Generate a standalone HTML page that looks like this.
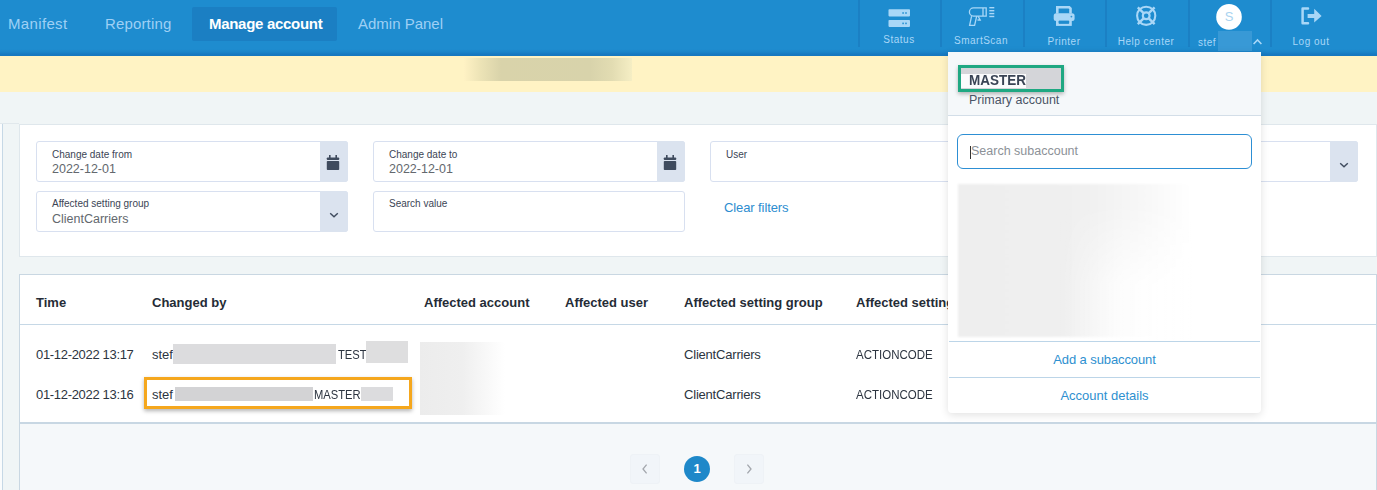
<!DOCTYPE html>
<html><head><meta charset="utf-8">
<style>
*{box-sizing:border-box;margin:0;padding:0}
html,body{width:1377px;height:490px;overflow:hidden;background:#f0f5f6;font-family:"Liberation Sans",sans-serif;position:relative}
.a{position:absolute}
#nav{left:0;top:0;width:1377px;height:56px;background:linear-gradient(180deg,#1e8ccf 0px,#1e8ccf 49px,#1b84c9 52px,#1779c1 54px,#1677c0 56px)}
.tab{top:0;height:48px;line-height:48px;font-size:15px;color:#9fd0f5;white-space:nowrap}
.act{left:192px;top:7px;width:145px;height:34px;background:#1b7fc3;border-radius:2px}
.sep{top:0;width:2px;height:47px;background:#1b80c4}
.lbl{top:34px;font-size:10px;letter-spacing:0.5px;color:#a9d7f7;white-space:nowrap;text-align:center;width:82px}
#yel{left:0;top:56px;width:1377px;height:36px;background:#fff3c4}
#vline{left:2px;top:124px;width:1px;height:366px;background:#c6d8e6}
#hline{left:0;top:123px;width:19px;height:1px;background:#e1e8ec}
.card{background:#fff;border:1px solid #dfe7ec}
.inp{background:#fff;border:1px solid #d8e0f0;border-radius:3px}
.btn{background:#dbe3ef;border-radius:0 3px 3px 0}
.ilbl{font-size:10px;color:#3c4555;white-space:nowrap}
.ival{font-size:12.5px;color:#63686e;white-space:nowrap}
.th{top:295px;font-size:13px;font-weight:bold;color:#252c36;white-space:nowrap}
.td{font-size:13px;color:#2c3440;white-space:nowrap}
</style></head><body>
<div id="nav" class="a">
  <div class="a act"></div>
  <div class="a tab" style="left:8px;letter-spacing:0.35px">Manifest</div>
  <div class="a tab" style="left:105px;letter-spacing:0.15px">Reporting</div>
  <div class="a tab" style="left:209px;color:#fff;font-weight:bold;letter-spacing:-0.3px">Manage account</div>
  <div class="a tab" style="left:358px">Admin Panel</div>
  <div class="a sep" style="left:858px"></div>
  <div class="a sep" style="left:940px"></div>
  <div class="a sep" style="left:1023px"></div>
  <div class="a sep" style="left:1105px"></div>
  <div class="a sep" style="left:1188px"></div>
  <div class="a sep" style="left:1270px"></div>
  <div class="a lbl" style="left:858px">Status</div>
  <div class="a lbl" style="left:940px;top:35px">SmartScan</div>
  <div class="a lbl" style="left:1023px;top:36px">Printer</div>
  <div class="a lbl" style="left:1105px;top:36px">Help center</div>
  <div class="a lbl" style="left:1270px;top:36px">Log out</div>

  <svg class="a" style="left:0;top:0" width="1377" height="56">
    <g fill="#a9d7f7">
      <rect x="888.5" y="9.2" width="21.5" height="7.2" rx="0.8"/>
      <rect x="888.5" y="19.9" width="21.5" height="7" rx="0.8"/>
    </g>
    <g fill="#2a93d3">
      <rect x="902.3" y="12.2" width="1.6" height="1.6"/><rect x="905.2" y="12.2" width="1.6" height="1.6"/>
      <rect x="902.3" y="22.6" width="1.6" height="1.6"/><rect x="905.2" y="22.6" width="1.6" height="1.6"/>
    </g>
    <g fill="none" stroke="#a9d7f7" stroke-width="1.3">
      <path d="M973.5 7.9 H986.2 V16.1 H973.5 A4.1 4.1 0 0 1 973.5 7.9 Z"/>
      <path d="M983 7.9 V16.1"/>
      <path d="M971.6 16.1 L969.6 25.3 H974.6 L976.7 16.1"/>
      <path d="M978.2 16.4 L980.2 20 H977.5"/>
    </g>
    <g fill="#a9d7f7">
      <rect x="989.3" y="7" width="5" height="1.4"/><rect x="989.3" y="10" width="5" height="1.4"/>
      <rect x="989.3" y="12.9" width="5" height="1.4"/><rect x="989.3" y="15.8" width="5" height="1.4"/>
    </g>
    <g fill="none" stroke="#a9d7f7" stroke-width="2.6">
      <path d="M1057.3 13.5 V7.3 H1069.2 L1070.5 8.6 V13.5"/>
      <rect x="1057.3" y="19.6" width="13.2" height="5"/>
    </g>
    <rect x="1053.7" y="13.3" width="20.9" height="7.6" rx="2.5" fill="#a9d7f7"/>
    <rect x="1057.3" y="19.6" width="13.2" height="1.4" fill="#a9d7f7"/>
    <rect x="1058.9" y="20.6" width="10" height="3.2" fill="#1e8ccf"/>
    <circle cx="1071.4" cy="16.6" r="0.9" fill="#2a93d3"/>
    <g fill="none" stroke="#a9d7f7">
      <circle cx="1146.2" cy="15.8" r="9.1" stroke-width="2.1"/>
      <circle cx="1146.2" cy="15.8" r="3.4" stroke-width="2.2"/>
      <path d="M1137.8 7.4 L1143.6 13.2 M1154.6 7.4 L1148.8 13.2 M1137.8 24.2 L1143.6 18.4 M1154.6 24.2 L1148.8 18.4" stroke-width="2.4"/>
    </g>
    <circle cx="1229" cy="16.9" r="12.8" fill="#fff"/>
    <path d="M1302.6 8.4 H1308 M1302.6 8.4 V23.3 M1302.6 23.3 H1308" fill="none" stroke="#a9d7f7" stroke-width="2.5" stroke-linecap="round"/>
    <path d="M1307.6 13.9 H1314.2 V8.8 L1321.6 16 L1314.2 22.6 V18.1 H1307.6 Z" fill="#a9d7f7"/>
    <path d="M1253.6 44 L1257.5 40 L1261.4 44" fill="none" stroke="#a9d7f7" stroke-width="1.6"/>
  </svg>
  <div class="a" style="left:1216px;top:4px;width:26px;height:26px;line-height:26px;text-align:center;font-size:13px;color:#a9d3f0">S</div>
  <div class="a" style="left:1218px;top:31px;width:34px;height:20px;background:#3899d6"></div>
  <div class="a lbl" style="left:1198px;top:37px;width:auto;text-align:left">stef</div>
</div>
<div id="yel" class="a"></div>
<div id="hline" class="a"></div>
<div id="vline" class="a"></div>
<div class="a" style="left:0;top:124px;width:2px;height:366px;background:#fafcfd"></div>

<!-- filter card -->
<div class="a card" style="left:19px;top:124px;width:1358px;height:133px"></div>
<div class="a inp" style="left:36px;top:141px;width:312px;height:41px"></div>
<div class="a btn" style="left:320px;top:141px;width:28px;height:41px"></div>
<div class="a ilbl" style="left:52px;top:149px">Change date from</div>
<div class="a ival" style="left:52px;top:162px">2022-12-01</div>

<div class="a inp" style="left:373px;top:141px;width:312px;height:41px"></div>
<div class="a btn" style="left:657px;top:141px;width:28px;height:41px"></div>
<div class="a ilbl" style="left:389px;top:149px">Change date to</div>
<div class="a ival" style="left:389px;top:162px">2022-12-01</div>

<div class="a inp" style="left:710px;top:141px;width:648px;height:41px"></div>
<div class="a btn" style="left:1330px;top:141px;width:28px;height:41px"></div>
<div class="a ilbl" style="left:726px;top:149px">User</div>

<div class="a inp" style="left:36px;top:191px;width:312px;height:41px"></div>
<div class="a btn" style="left:320px;top:191px;width:28px;height:41px"></div>
<div class="a ilbl" style="left:52px;top:198px">Affected setting group</div>
<div class="a ival" style="left:52px;top:212px">ClientCarriers</div>

<div class="a inp" style="left:373px;top:191px;width:312px;height:41px"></div>
<div class="a ilbl" style="left:389px;top:198px">Search value</div>
<div class="a" style="left:724px;top:200px;font-size:13px;letter-spacing:-0.1px;color:#2d8dd0;white-space:nowrap">Clear filters</div>

<!-- table card -->
<div class="a card" style="left:19px;top:274px;width:1358px;height:230px;background:#f5f8fa;border-color:#c9d7e2"></div>
<div class="a" style="left:20px;top:275px;width:1356px;height:149px;background:#fff;border-bottom:2px solid #c8d7e3"></div>
<div class="a" style="left:20px;top:324px;width:1356px;height:1px;background:#c6d8e6"></div>
<div class="a th" style="left:36px">Time</div>
<div class="a th" style="left:152px">Changed by</div>
<div class="a th" style="left:424px">Affected account</div>
<div class="a th" style="left:565px">Affected user</div>
<div class="a th" style="left:684px">Affected setting group</div>
<div class="a th" style="left:856px">Affected setting</div>

<div class="a td" style="left:36px;top:347px;letter-spacing:-0.32px">01-12-2022 13:17</div>
<div class="a td" style="left:36px;top:387px;letter-spacing:-0.32px">01-12-2022 13:16</div>
<div class="a td" style="left:684px;top:347px;letter-spacing:-0.2px">ClientCarriers</div>
<div class="a td" style="left:684px;top:387px;letter-spacing:-0.2px">ClientCarriers</div>
<div class="a td" style="left:856px;top:347px;transform:scaleX(0.885);transform-origin:0 0">ACTIONCODE</div>
<div class="a td" style="left:856px;top:387px;transform:scaleX(0.885);transform-origin:0 0">ACTIONCODE</div>


<svg class="a" style="left:326px;top:155px" width="14" height="16" viewBox="0 0 14 16"><g fill="#3f4b5e"><rect x="0.8" y="2.5" width="12.4" height="2.6" rx="0.8"/><rect x="0.8" y="6" width="12.4" height="9" rx="0.8"/><rect x="3" y="0" width="1.6" height="3.2"/><rect x="9.4" y="0" width="1.6" height="3.2"/></g></svg>
<svg class="a" style="left:663px;top:155px" width="14" height="16" viewBox="0 0 14 16"><g fill="#3f4b5e"><rect x="0.8" y="2.5" width="12.4" height="2.6" rx="0.8"/><rect x="0.8" y="6" width="12.4" height="9" rx="0.8"/><rect x="3" y="0" width="1.6" height="3.2"/><rect x="9.4" y="0" width="1.6" height="3.2"/></g></svg>
<svg class="a" style="left:328px;top:211px" width="12" height="8" viewBox="0 0 12 8"><path d="M2.2 2.2 L6 5.8 L9.8 2.2" fill="none" stroke="#3f4b5e" stroke-width="1.4"/></svg>
<svg class="a" style="left:1338px;top:161px" width="12" height="8" viewBox="0 0 12 8"><path d="M2.2 2.2 L6 5.8 L9.8 2.2" fill="none" stroke="#3f4b5e" stroke-width="1.4"/></svg>

<div class="a" style="left:464px;top:58px;width:168px;height:23px;background:linear-gradient(90deg,#fff2c4 0%,#ece3b6 10%,#d9d3aa 22%,#d8d3ab 75%,#e2dcb2 88%,#f5eec4 100%)"></div>

<!-- table redactions -->
<div class="a td" style="left:152px;top:347px">stef</div>
<div class="a" style="left:173px;top:344px;width:163px;height:20px;background:#dcdcde"></div>
<div class="a td" style="left:338px;top:347px;transform:scaleX(0.86);transform-origin:0 0">TEST</div>
<div class="a" style="left:366px;top:341px;width:42px;height:22px;background:#dededf"></div>
<div class="a" style="left:144px;top:377px;width:268px;height:32px;border:3px solid #f5a71d;box-shadow:0 2px 4px rgba(0,0,0,0.3)"></div>
<div class="a td" style="left:152px;top:387px">stef</div>
<div class="a" style="left:175px;top:387px;width:138px;height:14px;background:#d3d3d5"></div>
<div class="a td" style="left:314px;top:387px;transform:scaleX(0.86);transform-origin:0 0">MASTER</div>
<div class="a" style="left:361px;top:387px;width:32px;height:14px;background:#dcdcde"></div>
<div class="a" style="left:420px;top:342px;width:85px;height:73px;background:linear-gradient(90deg,#ececec 0%,#efefef 50%,#fff 100%)"></div>

<!-- pagination -->
<div class="a" style="left:630px;top:454px;width:30px;height:30px;border:1px solid #eef2f6;border-radius:3px;background:#f1f5f9"></div>
<div class="a" style="left:734px;top:454px;width:30px;height:30px;border:1px solid #eef2f6;border-radius:3px;background:#f1f5f9"></div>
<svg class="a" style="left:640px;top:462px" width="10" height="14"><path d="M6.6 2.6 L3 7 L6.6 11.4" fill="none" stroke="#a3a7ad" stroke-width="1.3"/></svg>
<svg class="a" style="left:744px;top:462px" width="10" height="14"><path d="M3.4 2.6 L7 7 L3.4 11.4" fill="none" stroke="#a3a7ad" stroke-width="1.3"/></svg>
<div class="a" style="left:684px;top:456px;width:26px;height:26px;border-radius:50%;background:#1e88c9;color:#fff;font-weight:bold;font-size:13px;line-height:26px;text-align:center">1</div>

<!-- dropdown panel -->
<div class="a" style="left:948px;top:52px;width:313px;height:361px;background:#fff;border-radius:0 0 4px 4px;box-shadow:0 2px 8px rgba(0,0,0,0.12)"></div>
<div class="a" style="left:948px;top:52px;width:313px;height:64px;background:#f5f8fa;border-bottom:1px solid #d3dee8"></div>
<div class="a" style="left:958px;top:65px;width:106px;height:27px;border:3.5px solid #1fa882;background:#d4d5d9;box-shadow:0 2px 4px rgba(0,0,0,0.28)"></div>
<div class="a" style="left:961px;top:74px;width:65px;height:14px;background:#fbfbfc"></div>
<div class="a" style="left:969px;top:72px;font-size:14.5px;transform:scaleX(0.93);transform-origin:0 0;font-weight:bold;color:#3a4455;white-space:nowrap">MASTER</div>
<div class="a" style="left:969px;top:93px;font-size:12.5px;letter-spacing:0px;color:#4a5466;white-space:nowrap">Primary account</div>
<div class="a" style="left:957px;top:134px;width:295px;height:35px;border:1px solid #2d8fd4;border-radius:6px;background:#fff"></div>
<div class="a" style="left:971px;top:144px;font-size:12.5px;color:#8c9197;white-space:nowrap">Search subaccount</div>
<div class="a" style="left:970px;top:146px;width:1px;height:13px;background:#333"></div>
<div class="a" style="left:958px;top:184px;width:232px;height:153px;background:linear-gradient(90deg,#eeeeee 0%,#f0f0f0 55%,#f8f8f8 82%,#fff 100%);filter:blur(1px)"></div>
<div class="a" style="left:1060px;top:200px;width:132px;height:140px;background:linear-gradient(90deg,rgba(255,255,255,0) 0%,rgba(255,255,255,0.75) 45%,#fff 100%);-webkit-mask-image:linear-gradient(180deg,transparent 0%,#000 60%)"></div>
<div class="a" style="left:949px;top:341px;width:311px;height:1px;background:#bcd5e8"></div>
<div class="a" style="left:949px;top:377px;width:311px;height:1px;background:#bcd5e8"></div>
<div class="a" style="left:948px;top:352px;width:313px;text-align:center;font-size:13px;letter-spacing:-0.1px;color:#2e90d0;white-space:nowrap">Add a subaccount</div>
<div class="a" style="left:948px;top:388px;width:313px;text-align:center;font-size:13px;color:#2e90d0;white-space:nowrap">Account details</div>
</body></html>
